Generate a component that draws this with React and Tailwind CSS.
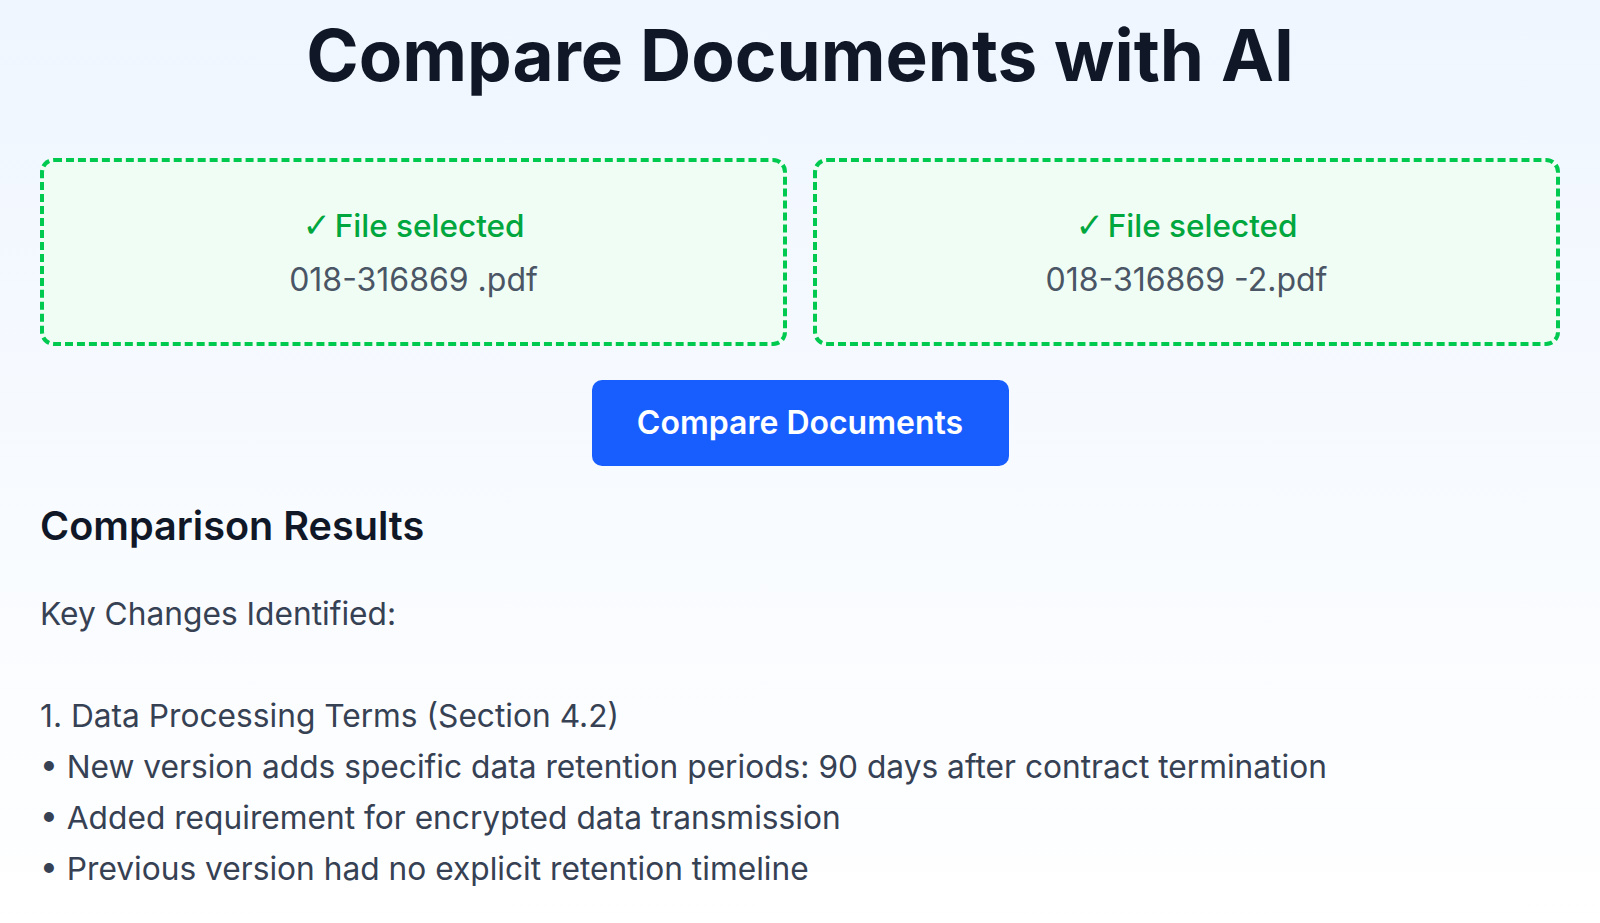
import React from 'react';

const files = ['018-316869 .pdf', '018-316869 -2.pdf'];

const result = `Key Changes Identified:

1. Data Processing Terms (Section 4.2)
• New version adds specific data retention periods: 90 days after contract termination
• Added requirement for encrypted data transmission
• Previous version had no explicit retention timeline`;

const FileBox = ({ name }) => (
  <div className="h-[188px] rounded-[14px] border-4 border-dashed border-[#00c950] bg-[#f0fdf4] flex flex-col items-center justify-center pt-[2px]">
    <div className="text-[31.5px] leading-[40px] font-medium text-[#00a63e]">
      <span
        style={{ fontFamily: '"DejaVu Sans", sans-serif' }}
        className="inline-block w-[24px] text-[34px] leading-none font-bold"
      >
        ✓
      </span>{' '}
      File selected
    </div>
    <div className="mt-[14px] text-[32px] leading-[40px] text-[#4a5565]">{name}</div>
  </div>
);

export default function App() {
  return (
    <div
      className="min-h-screen bg-gradient-to-b from-[#eff6ff] to-white px-10 pb-10"
      style={{ fontFamily: 'Inter, "Noto Sans", sans-serif' }}
    >
      <h1 className="pt-[20px] text-center text-[71px] leading-[71px] font-bold text-[#101828]">
        Compare Documents with AI
      </h1>

      {/* Upload boxes */}
      <div className="mt-[67px] grid grid-cols-2 gap-[26px]">
        {files.map((f) => (
          <FileBox key={f} name={f} />
        ))}
      </div>

      <div className="mt-[34px] flex justify-center">
        <button className="w-[417px] h-[86px] rounded-[10px] bg-[#185eff] text-white text-[32px] font-semibold">
          Compare Documents
        </button>
      </div>

      {/* Results */}
      <h2 className="mt-[37px] text-[39.6px] leading-[47px] font-semibold text-[#101828]">
        Comparison Results
      </h2>
      <div className="mt-[38px] whitespace-pre-wrap text-[31.7px] leading-[51px] text-[#364153]">
        {result}
      </div>
    </div>
  );
}
